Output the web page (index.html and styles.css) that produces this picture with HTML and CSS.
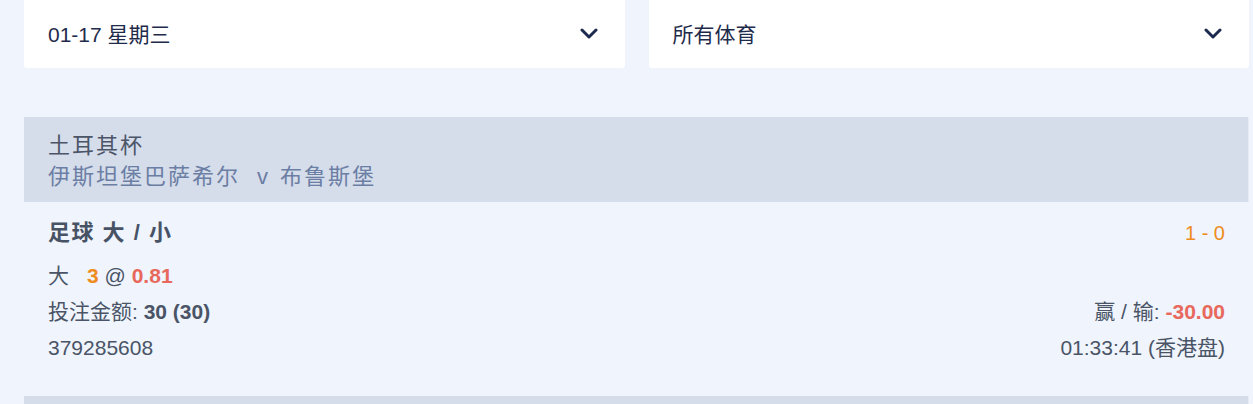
FILE: index.html
```html
<!DOCTYPE html>
<html lang="zh">
<head>
<meta charset="utf-8">
<link rel="stylesheet" href="styles.css">
</head>
<body>
<div class="page">
  <div class="filters">
    <div class="select">
      <span class="select-label">01-17 星期三</span>
      <svg class="chevron" viewBox="0 0 18 11" width="18" height="11"><path d="M2 2 L9 9 L16 2" fill="none" stroke="#1b2a4e" stroke-width="3" stroke-linecap="round" stroke-linejoin="round"/></svg>
    </div>
    <div class="select">
      <span class="select-label">所有体育</span>
      <svg class="chevron" viewBox="0 0 18 11" width="18" height="11"><path d="M2 2 L9 9 L16 2" fill="none" stroke="#1b2a4e" stroke-width="3" stroke-linecap="round" stroke-linejoin="round"/></svg>
    </div>
  </div>

  <div class="bet">
    <div class="bet-head">
      <div class="league">土耳其杯</div>
      <div class="teams"><span>伊斯坦堡巴萨希尔</span><span class="vs">v</span><span>布鲁斯堡</span></div>
    </div>
    <div class="bet-body">
      <div class="row title-row">
        <span class="market">足球 大 / 小</span>
        <span class="score">1 - 0</span>
      </div>
      <div class="row">
        <span>大<span class="line">3</span> @ <b class="odds">0.81</b></span>
      </div>
      <div class="row">
        <span>投注金额: <b>30 (30)</b></span>
        <span>赢 / 输: <b class="loss">-30.00</b></span>
      </div>
      <div class="row">
        <span>379285608</span>
        <span>01:33:41 (香港盘)</span>
      </div>
    </div>
  </div>

  <div class="bet">
    <div class="bet-head empty"></div>
  </div>
</div>
</body>
</html>
```

FILE: styles.css
```css
* { box-sizing: border-box; }
html, body {
  margin: 0;
  background: #eff4fd;
  overflow: hidden;
}
body {
  font-family: "Liberation Sans", "Noto Sans CJK SC", sans-serif;
  font-size: 21px;
  color: #4a5466;
}
.page {
  padding: 0 4px 0 24px;
}
.filters {
  display: grid;
  grid-template-columns: 1fr 1fr;
  column-gap: 24px;
}
.select {
  height: 68px;
  background: #ffffff;
  border-radius: 0 0 3px 3px;
  display: flex;
  align-items: center;
  justify-content: space-between;
  padding: 0 27px 2px 24px;
}
.select-label {
  color: #1f2b4b;
  font-size: 21px;
}
.chevron { display: block; }

.bet {
  margin-top: 49px;
}
.bet + .bet { margin-top: 0; }
.bet-head {
  background: #d5dcea;
  padding: 13px 24px 10px;
  line-height: 31px;
  border-right: 1px solid #e6ebf4;
}
.bet-head.empty { height: 85px; }
.league {
  color: #4c5567;
  font-size: 22px;
  letter-spacing: 2px;
}
.teams {
  color: #6b7ea4;
  font-size: 22px;
  letter-spacing: 2px;
}
.teams .vs {
  margin: 0 12px 0 17px;
  letter-spacing: 0;
}
.bet-body {
  padding: 13px 24px 30px;
}
.row {
  display: flex;
  justify-content: space-between;
  align-items: center;
  height: 36px;
  line-height: 36px;
  color: #4a5466;
}
.title-row {
  margin-bottom: 7px;
}
.market {
  font-weight: bold;
  font-size: 22px;
  letter-spacing: 1.5px;
  color: #485265;
}
.score {
  color: #ef8c1e;
  font-size: 20px;
}
b { font-weight: bold; color: #4a5466; }
.line {
  color: #ef8c1e;
  font-weight: bold;
  margin-left: 18px;
}
.odds { color: #e8685c; }
.loss { color: #e8685c; }
```
